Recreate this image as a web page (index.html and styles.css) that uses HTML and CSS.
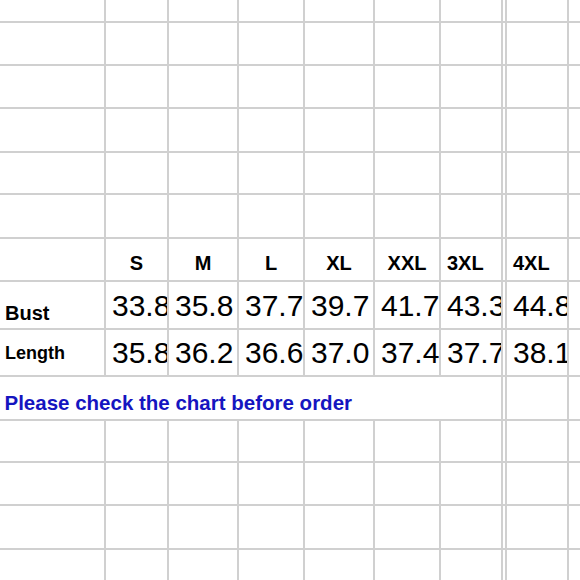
FILE: index.html
```html
<!DOCTYPE html>
<html>
<head>
<meta charset="utf-8">
<title>Size chart</title>
<link rel="stylesheet" href="styles.css">
</head>
<body>
<div class="sheet">
  <div class="row"><div class="c"></div><div class="c"></div><div class="c"></div><div class="c"></div><div class="c"></div><div class="c"></div><div class="c"></div><div class="c"></div><div class="c"></div><div class="c"></div></div>
  <div class="row"><div class="c"></div><div class="c"></div><div class="c"></div><div class="c"></div><div class="c"></div><div class="c"></div><div class="c"></div><div class="c"></div><div class="c"></div><div class="c"></div></div>
  <div class="row"><div class="c"></div><div class="c"></div><div class="c"></div><div class="c"></div><div class="c"></div><div class="c"></div><div class="c"></div><div class="c"></div><div class="c"></div><div class="c"></div></div>
  <div class="row"><div class="c"></div><div class="c"></div><div class="c"></div><div class="c"></div><div class="c"></div><div class="c"></div><div class="c"></div><div class="c"></div><div class="c"></div><div class="c"></div></div>
  <div class="row"><div class="c"></div><div class="c"></div><div class="c"></div><div class="c"></div><div class="c"></div><div class="c"></div><div class="c"></div><div class="c"></div><div class="c"></div><div class="c"></div></div>
  <div class="row"><div class="c"></div><div class="c"></div><div class="c"></div><div class="c"></div><div class="c"></div><div class="c"></div><div class="c"></div><div class="c"></div><div class="c"></div><div class="c"></div></div>
  <div class="row head">
    <div class="c"></div>
    <div class="c ctr">S</div>
    <div class="c ctr">M</div>
    <div class="c ctr">L</div>
    <div class="c ctr">XL</div>
    <div class="c ctr">XXL</div>
    <div class="c lft">3XL</div>
    <div class="c"></div>
    <div class="c lft">4XL</div>
    <div class="c"></div>
  </div>
  <div class="row bust">
    <div class="c lbl">Bust</div>
    <div class="c num">33.8</div>
    <div class="c num">35.8</div>
    <div class="c num">37.7</div>
    <div class="c num">39.7</div>
    <div class="c num">41.7</div>
    <div class="c num">43.3</div>
    <div class="c"></div>
    <div class="c num">44.8</div>
    <div class="c"></div>
  </div>
  <div class="row len">
    <div class="c lbl">Length</div>
    <div class="c num">35.8</div>
    <div class="c num">36.2</div>
    <div class="c num">36.6</div>
    <div class="c num">37.0</div>
    <div class="c num">37.4</div>
    <div class="c num">37.7</div>
    <div class="c"></div>
    <div class="c num">38.1</div>
    <div class="c"></div>
  </div>
  <div class="row">
    <div class="c note">Please check the chart before order</div>
    <div class="c"></div><div class="c"></div><div class="c"></div>
  </div>
  <div class="row"><div class="c"></div><div class="c"></div><div class="c"></div><div class="c"></div><div class="c"></div><div class="c"></div><div class="c"></div><div class="c"></div><div class="c"></div><div class="c"></div></div>
  <div class="row"><div class="c"></div><div class="c"></div><div class="c"></div><div class="c"></div><div class="c"></div><div class="c"></div><div class="c"></div><div class="c"></div><div class="c"></div><div class="c"></div></div>
  <div class="row"><div class="c"></div><div class="c"></div><div class="c"></div><div class="c"></div><div class="c"></div><div class="c"></div><div class="c"></div><div class="c"></div><div class="c"></div><div class="c"></div></div>
  <div class="row"><div class="c"></div><div class="c"></div><div class="c"></div><div class="c"></div><div class="c"></div><div class="c"></div><div class="c"></div><div class="c"></div><div class="c"></div><div class="c"></div></div>
</div>
</body>
</html>
```

FILE: styles.css
```css
html, body {
  margin: 0;
  padding: 0;
  background: #fff;
}

body {
  width: 580px;
  height: 580px;
  overflow: hidden;
  font-family: "Liberation Sans", Arial, sans-serif;
}

.sheet {
  display: grid;
  width: 580px;
  height: 580px;
  background: #d0d0d0;
  gap: 2px;
  grid-template-columns: 104px 61px 68px 64px 68px 64px 60px 2px 60px 1fr;
  grid-template-rows: 21px 41px 41px 42px 40px 42px 41px 46px 45px 42px 40px 41px 42px 1fr;
}

.row {
  display: contents;
}

.c {
  background: #fff;
  overflow: hidden;
  white-space: nowrap;
  color: #000;
}

.head .c {
  font-weight: bold;
  font-size: 20px;
  line-height: 20px;
  padding-top: 14px;
}

.head .ctr {
  text-align: center;
}

.head .lft {
  padding-left: 6px;
}

.lbl {
  font-weight: bold;
  padding-left: 5px;
}

.bust .lbl {
  font-size: 20px;
  line-height: 20px;
  padding-top: 21px;
}

.len .lbl {
  font-size: 18px;
  line-height: 18px;
  padding-top: 13.5px;
}

.num {
  font-size: 30px;
  line-height: 30px;
  padding-left: 6px;
}

.bust .num {
  padding-top: 9px;
}

.len .num {
  padding-top: 7.5px;
}

.note {
  grid-column: span 7;
  color: #1515c0;
  font-weight: bold;
  font-size: 20.5px;
  line-height: 20.5px;
  padding: 16px 0 0 4.5px;
}
```
